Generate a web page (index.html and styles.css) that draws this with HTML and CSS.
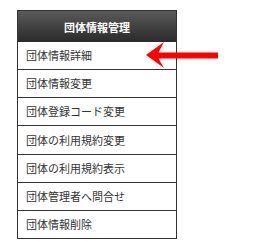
FILE: index.html
```html
<!DOCTYPE html>
<html lang="ja">
<head>
<meta charset="utf-8">
<link rel="stylesheet" href="styles.css">
</head>
<body>
<div class="page">
  <div class="menu">
    <div class="menu-head">団体情報管理</div>
    <ul class="menu-list">
      <li class="menu-item">団体情報詳細</li>
      <li class="menu-item">団体情報変更</li>
      <li class="menu-item">団体登録コード変更</li>
      <li class="menu-item">団体の利用規約変更</li>
      <li class="menu-item">団体の利用規約表示</li>
      <li class="menu-item">団体管理者へ問合せ</li>
      <li class="menu-item">団体情報削除</li>
    </ul>
    <svg class="arrow" width="74" height="28" viewBox="0 0 74 28">
      <polygon points="0,14 18,1 12.5,11.5 72,11.5 72,17.5 12.5,17.5 18,27" fill="#ff0000"/>
    </svg>
  </div>
</div>
</body>
</html>
```
FILE: styles.css
```css
html, body {
  margin: 0;
  padding: 0;
  background: #ffffff;
}
.page {
  padding: 10px 0 0 17px;
}
.menu {
  position: relative;
  width: 160px;
  font-family: "Noto Sans CJK JP", "Noto Sans", sans-serif;
  font-size: 11px;
  color: #333333;
}
.menu-head {
  box-sizing: border-box;
  height: 32px;
  border: 1px solid #333333;
  border-bottom: none;
  background: linear-gradient(#5a5a5a, #2a2a2a);
  color: #ffffff;
  font-weight: bold;
  display: flex;
  align-items: center;
  justify-content: center;
}
.menu-list {
  list-style: none;
  margin: 0;
  padding: 0;
  border-left: 1px solid #333333;
  border-right: 1px solid #333333;
}
.menu-item {
  height: 27.17px;
  border-bottom: 1px solid #333333;
  padding-left: 8px;
  display: flex;
  align-items: center;
  line-height: 1;
}
.arrow {
  position: absolute;
  left: 129px;
  top: 31px;
}
```
